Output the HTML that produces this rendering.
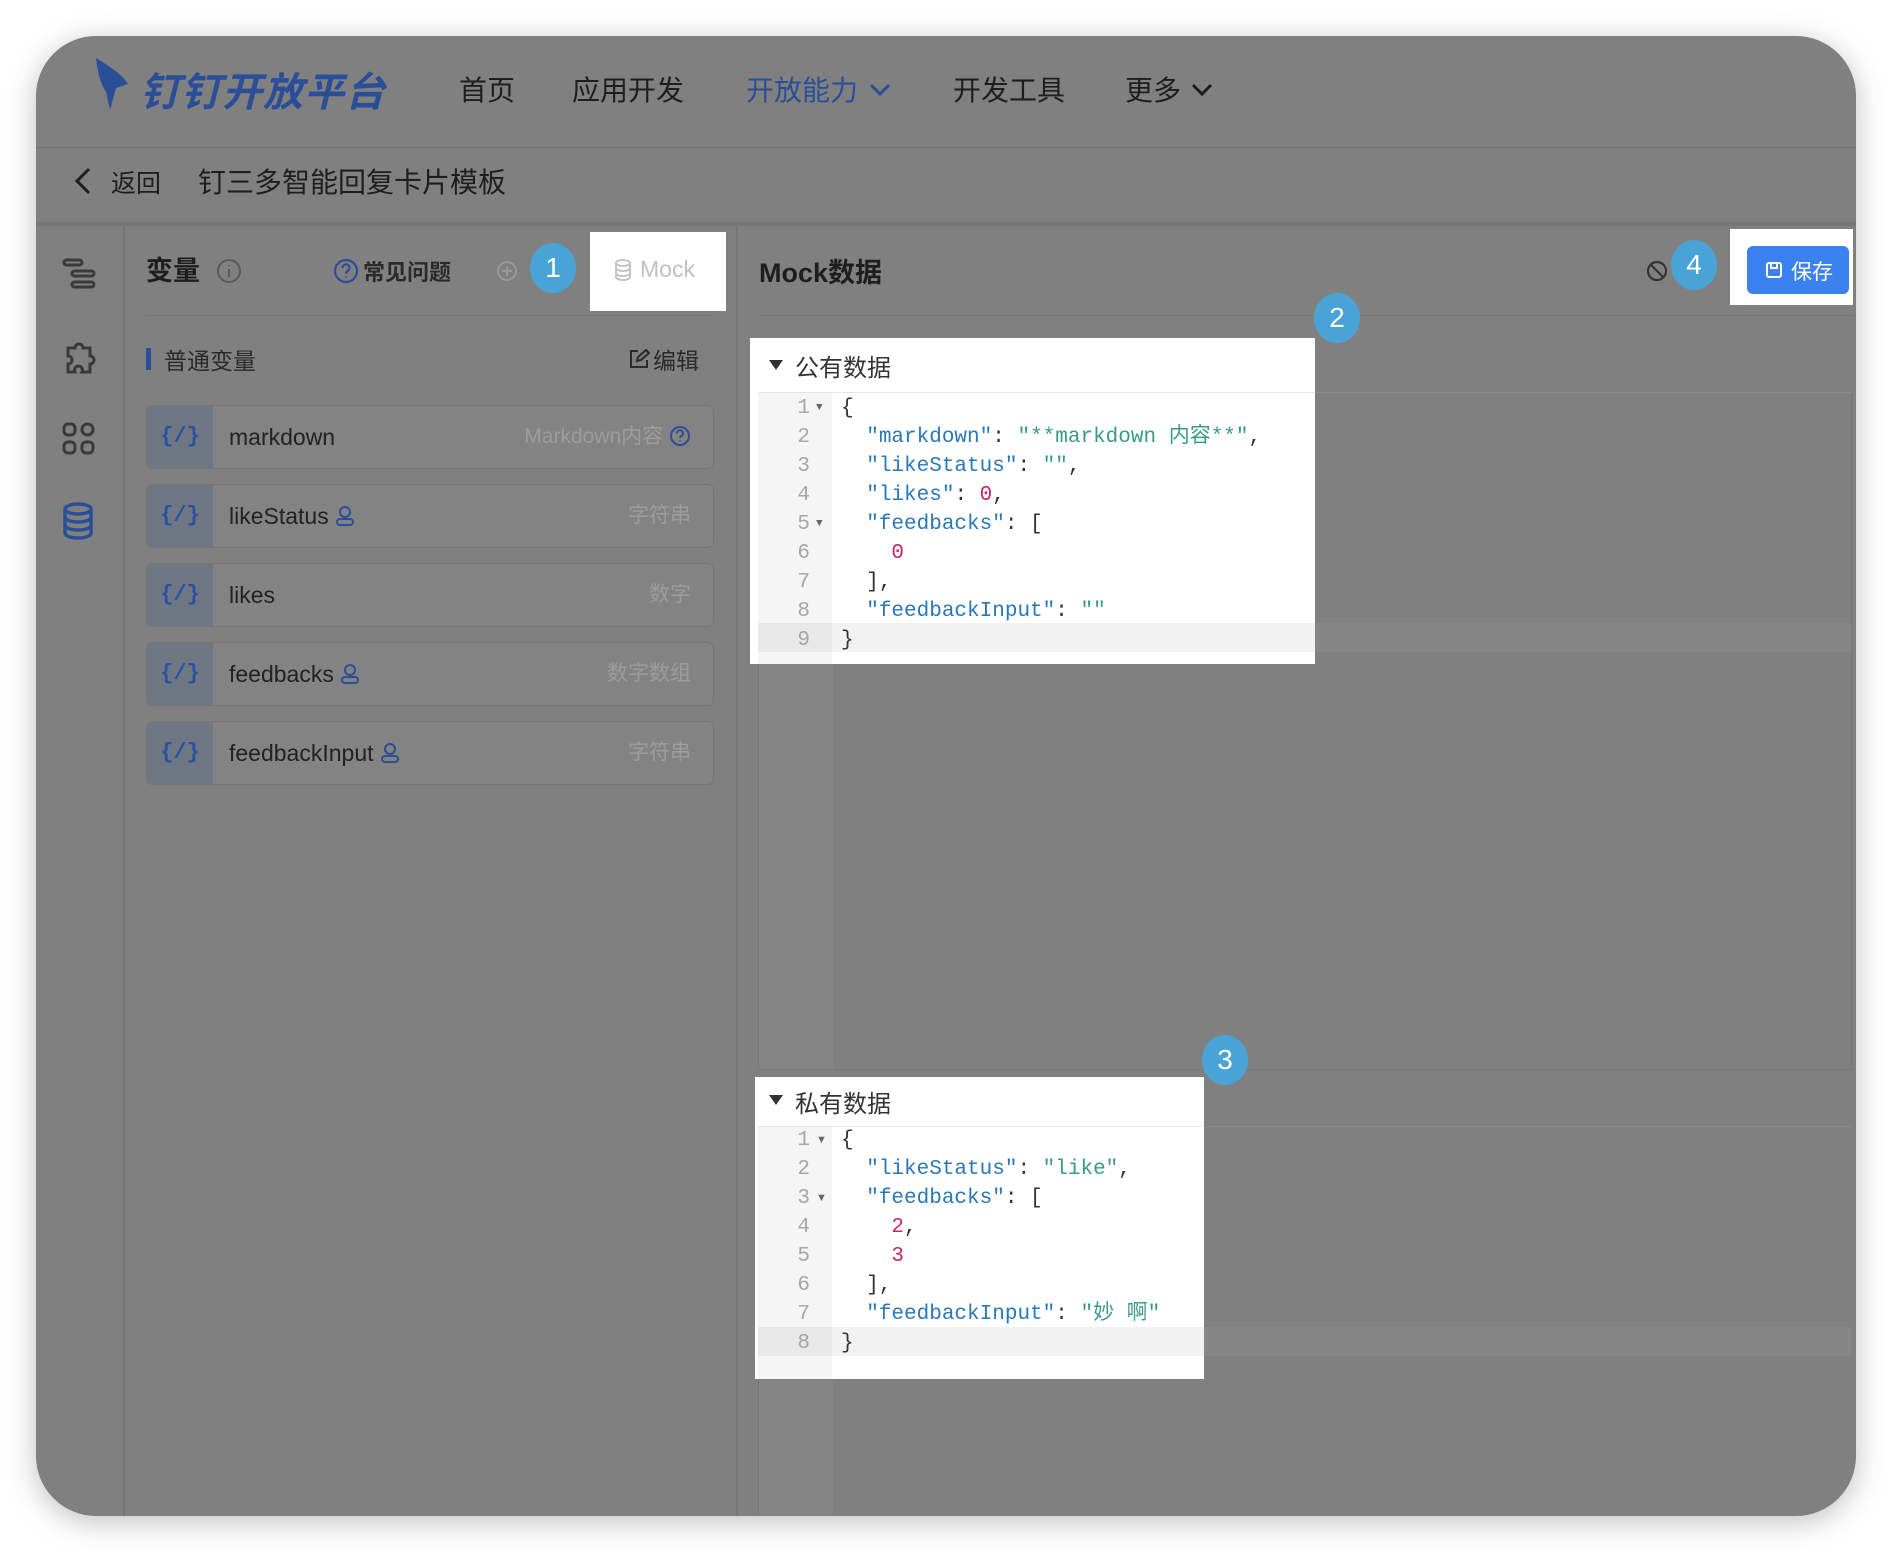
<!DOCTYPE html>
<html><head><meta charset="utf-8"><style>
*{margin:0;padding:0;box-sizing:border-box}
body{width:1892px;height:1552px;background:#fff;position:relative;overflow:hidden;font-family:"Liberation Sans","Noto Sans CJK SC",sans-serif;color:#1e1e1e}
.a{position:absolute}
.card{left:36px;top:36px;width:1820px;height:1480px;background:#808080;border-radius:60px;overflow:hidden;box-shadow:0 6px 30px rgba(0,0,0,.25)}
.t{position:absolute;white-space:nowrap}
.row{position:absolute;left:146px;width:568px;height:64px;background:#838383;border:1px solid #767676;border-radius:6px;overflow:hidden}
.row .ic{position:absolute;left:0;top:0;width:66px;height:100%;background:#6f7784;color:#2a52a0;font:bold 22px "Liberation Mono",monospace;text-align:center;line-height:62px}
.row .n{position:absolute;left:82px;top:0;line-height:62px;font-size:23px;color:#222}
.row .n svg{vertical-align:-3px;margin-left:6px}
.row .r{position:absolute;right:22px;top:0;line-height:62px;font-size:21px;color:#9c9c9c}
.badge{position:absolute;width:46px;height:50px;border-radius:50%;background:#4aa3d6;color:#fff;font-size:28px;text-align:center;line-height:50px}
.code{font-family:"Liberation Mono","Noto Sans CJK SC",monospace;font-size:21px}
.ln{position:absolute;width:52px;text-align:right;color:#a6a6a6;font-family:"Liberation Mono",monospace;font-size:21px}
.k{color:#2a78b8}.s{color:#3a9a88}.num{color:#c8246a}.p{color:#333}
.tri{position:absolute;width:0;height:0;border-left:7px solid transparent;border-right:7px solid transparent;border-top:10px solid #333}
</style></head><body>
<div class="a card">
 <div class="a" style="left:0;top:111px;width:1820px;height:1px;background:#737373"></div>
 <svg class="a" style="left:56px;top:20px" width="40" height="56" viewBox="0 0 40 56"><path d="M4 2 C14 8 30 18 36 28 L24 32 L18 54 L14 36 C10 30 6 20 4 2 Z" fill="#2a4f98"/></svg>
 <div class="t" style="left:104px;top:24px;font-size:40px;font-weight:bold;font-style:italic;color:#2a4f98;letter-spacing:1px">钉钉开放平台</div>
 <div class="t" style="left:423px;top:33px;font-size:28px">首页</div>
 <div class="t" style="left:536px;top:33px;font-size:28px">应用开发</div>
 <div class="t" style="left:710px;top:33px;font-size:28px;color:#2a4f98">开放能力</div>
 <svg class="a" style="left:832px;top:46px" width="24" height="16"><path d="M3 3 L12 12 L21 3" fill="none" stroke="#2a4f98" stroke-width="3"/></svg>
 <div class="t" style="left:917px;top:33px;font-size:28px">开发工具</div>
 <div class="t" style="left:1089px;top:33px;font-size:28px">更多</div>
 <svg class="a" style="left:1154px;top:46px" width="24" height="16"><path d="M3 3 L12 12 L21 3" fill="none" stroke="#1e1e1e" stroke-width="3"/></svg>
 <svg class="a" style="left:36px;top:130px" width="22" height="30"><path d="M17 3 L5 15 L17 27" fill="none" stroke="#1e1e1e" stroke-width="3"/></svg>
 <div class="t" style="left:75px;top:128px;font-size:25px">返回</div>
 <div class="t" style="left:162px;top:125px;font-size:28px">钉三多智能回复卡片模板</div>
 <div class="a" style="left:0;top:186px;width:1820px;height:4px;background:#767676"></div>
 <div class="a" style="left:87px;top:190px;width:2px;height:1300px;background:#767676"></div>
 <svg class="a" style="left:26px;top:220px" width="36" height="36" fill="none" stroke="#3a3a3a" stroke-width="3"><rect x="2" y="4" width="18" height="5" rx="2.5"/><rect x="10" y="15" width="22" height="5" rx="2.5"/><rect x="10" y="26" width="22" height="5" rx="2.5"/></svg>
 <svg class="a" style="left:24px;top:302px" width="38" height="38" fill="none" stroke="#3a3a3a" stroke-width="3"><path d="M8 10h7a4 4 0 1 1 8 0h7v8a4 4 0 1 1 0 8v8h-8a4 4 0 1 0-7 0H8v-8a4 4 0 1 0 0-8z"/></svg>
 <svg class="a" style="left:26px;top:386px" width="34" height="34" fill="none" stroke="#3a3a3a" stroke-width="3"><rect x="2" y="2" width="11" height="11" rx="4"/><rect x="2" y="20" width="11" height="11" rx="4"/><rect x="20" y="20" width="11" height="11" rx="4"/><rect x="20" y="2" width="11" height="11" rx="5.5"/></svg>
 <svg class="a" style="left:26px;top:466px" width="32" height="38" fill="none" stroke="#2a4f98" stroke-width="3.5"><ellipse cx="16" cy="7" rx="13" ry="5"/><path d="M3 7v24c0 3 6 5 13 5s13-2 13-5V7M3 15c0 3 6 5 13 5s13-2 13-5M3 23c0 3 6 5 13 5s13-2 13-5"/></svg>
 <div class="t" style="left:110px;top:213px;font-size:27px;font-weight:bold">变量</div>
 <svg class="a" style="left:180px;top:222px" width="26" height="26" fill="none" stroke="#5a5a5a" stroke-width="2"><circle cx="13" cy="13" r="11"/><path d="M13 11v8M13 7v1"/></svg>
 <svg class="a" style="left:297px;top:222px" width="26" height="26" fill="none" stroke="#2a4f98" stroke-width="2.2"><circle cx="13" cy="13" r="11"/><path d="M9.5 10a3.5 3.5 0 1 1 5 3c-1.2.6-1.5 1.2-1.5 2.5M13 18.5v1"/></svg>
 <div class="t" style="left:327px;top:219px;font-size:22px;font-weight:bold;color:#2a2a2a">常见问题</div>
 <svg class="a" style="left:460px;top:224px" width="22" height="22" fill="none" stroke="#9a9a9a" stroke-width="1.8"><circle cx="11" cy="11" r="9"/><path d="M11 6v10M6 11h10"/></svg>
 <div class="a" style="left:110px;top:279px;width:568px;height:1px;background:#777"></div>
 <div class="a" style="left:110px;top:312px;width:5px;height:22px;background:#2a4f98"></div>
 <div class="t" style="left:128px;top:306px;font-size:23px;color:#2a2a2a">普通变量</div>
 <svg class="a" style="left:592px;top:312px" width="22" height="22" fill="none" stroke="#2a2a2a" stroke-width="2"><path d="M10 3H3v16h16v-7"/><path d="M9 13l1-4 8-7 3 3-8 7z"/></svg>
 <div class="t" style="left:617px;top:306px;font-size:23px;color:#2a2a2a">编辑</div>
 <div class="a" style="left:700px;top:190px;width:2px;height:1300px;background:#767676"></div>
</div>
<div class="row" style="top:405px"><div class="ic">{/}</div><div class="n">markdown</div><div class="r">Markdown内容 <svg width="22" height="22" style="vertical-align:-4px" fill="none" stroke="#2a4f98" stroke-width="2"><circle cx="11" cy="11" r="9"/><path d="M8 8.5a3 3 0 1 1 4 2.6c-1 .5-1 1-1 2M11 15.5v1"/></svg></div></div>
<div class="row" style="top:484px"><div class="ic">{/}</div><div class="n">likeStatus<svg width="20" height="22" fill="none" stroke="#2a4f98" stroke-width="2"><circle cx="10" cy="7" r="5"/><rect x="2" y="14" width="16" height="6" rx="3"/></svg></div><div class="r">字符串</div></div>
<div class="row" style="top:563px"><div class="ic">{/}</div><div class="n">likes</div><div class="r">数字</div></div>
<div class="row" style="top:642px"><div class="ic">{/}</div><div class="n">feedbacks<svg width="20" height="22" fill="none" stroke="#2a4f98" stroke-width="2"><circle cx="10" cy="7" r="5"/><rect x="2" y="14" width="16" height="6" rx="3"/></svg></div><div class="r">数字数组</div></div>
<div class="row" style="top:721px"><div class="ic">{/}</div><div class="n">feedbackInput<svg width="20" height="22" fill="none" stroke="#2a4f98" stroke-width="2"><circle cx="10" cy="7" r="5"/><rect x="2" y="14" width="16" height="6" rx="3"/></svg></div><div class="r">字符串</div></div>

<div class="a" style="left:590px;top:232px;width:136px;height:79px;background:#fff"></div>
<svg class="a" style="left:614px;top:259px" width="18" height="22" fill="none" stroke="#c0c0c0" stroke-width="1.8"><ellipse cx="9" cy="4" rx="7" ry="3"/><path d="M2 4v14c0 1.7 3 3 7 3s7-1.3 7-3V4M2 9c0 1.7 3 3 7 3s7-1.3 7-3M2 14c0 1.7 3 3 7 3s7-1.3 7-3"/></svg>
<div class="t" style="left:640px;top:256px;font-size:23px;color:#c0c0c0">Mock</div>

<div class="t" style="left:759px;top:251px;font-size:27px;font-weight:bold">Mock数据</div>
<div class="a" style="left:758px;top:315px;width:1096px;height:1px;background:#777"></div>
<svg class="a" style="left:1645px;top:259px" width="24" height="24" fill="none" stroke="#333" stroke-width="2.2"><circle cx="12" cy="12" r="9"/><path d="M6 6l12 12"/></svg>
<div class="a" style="left:758px;top:392px;width:1094px;height:678px;border:1px solid #777;border-top-color:#8a8a8a"></div>
<div class="a" style="left:759px;top:393px;width:74px;height:676px;background:#858585"></div>
<div class="a" style="left:759px;top:623px;width:1092px;height:29px;background:#868686"></div>
<div class="a" style="left:758px;top:1126px;width:1094px;height:390px;border-left:1px solid #777;border-top:1px solid #8a8a8a"></div>
<div class="a" style="left:759px;top:1127px;width:74px;height:389px;background:#858585"></div>
<div class="a" style="left:759px;top:1327px;width:1092px;height:29px;background:#868686"></div>

<div class="a" style="left:750px;top:338px;width:565px;height:326px;background:#fff">
 <div class="tri" style="left:19px;top:22px"></div>
 <div class="t" style="left:45px;top:10px;font-size:24px;color:#333">公有数据</div>
 <div class="a" style="left:8px;top:54px;width:557px;height:1px;background:#e6e6e6"></div>
 <div class="a" style="left:8px;top:55px;width:74px;height:271px;background:#f5f5f5"></div>
 <div class="a" style="left:8px;top:285px;width:557px;height:29px;background:rgba(0,0,0,.05)"></div>
 <div class="code a" style="left:8px;top:56px;line-height:29px;width:557px">
  <div class="ln" style="left:0">1<br>2<br>3<br>4<br>5<br>6<br>7<br>8<br>9</div>
  <div class="a" style="left:58px;top:0;color:#666;font-size:11px;line-height:29px">▼<br><br><br><br>▼</div>
  <pre class="a code" style="left:83px;top:0;line-height:29px"><span class="p">{</span>
  <span class="k">"markdown"</span><span class="p">: </span><span class="s">"**markdown 内容**"</span><span class="p">,</span>
  <span class="k">"likeStatus"</span><span class="p">: </span><span class="s">""</span><span class="p">,</span>
  <span class="k">"likes"</span><span class="p">: </span><span class="num">0</span><span class="p">,</span>
  <span class="k">"feedbacks"</span><span class="p">: [</span>
    <span class="num">0</span>
  <span class="p">],</span>
  <span class="k">"feedbackInput"</span><span class="p">: </span><span class="s">""</span>
<span class="p">}</span></pre>
 </div>
</div>

<div class="a" style="left:755px;top:1077px;width:449px;height:302px;background:#fff">
 <div class="tri" style="left:14px;top:18px"></div>
 <div class="t" style="left:40px;top:7px;font-size:24px;color:#333">私有数据</div>
 <div class="a" style="left:3px;top:49px;width:446px;height:1px;background:#e6e6e6"></div>
 <div class="a" style="left:3px;top:50px;width:74px;height:252px;background:#f5f5f5"></div>
 <div class="a" style="left:3px;top:250px;width:446px;height:29px;background:rgba(0,0,0,.05)"></div>
 <div class="a" style="left:3px;top:49px;width:446px">
  <div class="ln" style="left:0;line-height:29px">1<br>2<br>3<br>4<br>5<br>6<br>7<br>8</div>
  <div class="a" style="left:58px;top:0;color:#666;font-size:11px;line-height:29px">▼<br><br>▼</div>
  <pre class="a code" style="left:83px;top:0;line-height:29px"><span class="p">{</span>
  <span class="k">"likeStatus"</span><span class="p">: </span><span class="s">"like"</span><span class="p">,</span>
  <span class="k">"feedbacks"</span><span class="p">: [</span>
    <span class="num">2</span><span class="p">,</span>
    <span class="num">3</span>
  <span class="p">],</span>
  <span class="k">"feedbackInput"</span><span class="p">: </span><span class="s">"妙 啊"</span>
<span class="p">}</span></pre>
 </div>
</div>

<div class="a" style="left:1730px;top:229px;width:123px;height:76px;background:#fff"></div>
<div class="a" style="left:1747px;top:246px;width:102px;height:48px;background:#3b82f0;border-radius:6px"></div>
<svg class="a" style="left:1765px;top:261px" width="18" height="18" fill="none" stroke="#fff" stroke-width="2"><rect x="2" y="2" width="14" height="14" rx="2"/><path d="M6 2v5h6V2"/></svg>
<div class="t" style="left:1791px;top:256px;font-size:21px;color:#fff">保存</div>

<div class="badge" style="left:530px;top:243px">1</div>
<div class="badge" style="left:1314px;top:293px">2</div>
<div class="badge" style="left:1202px;top:1035px">3</div>
<div class="badge" style="left:1671px;top:240px">4</div>
</body></html>
